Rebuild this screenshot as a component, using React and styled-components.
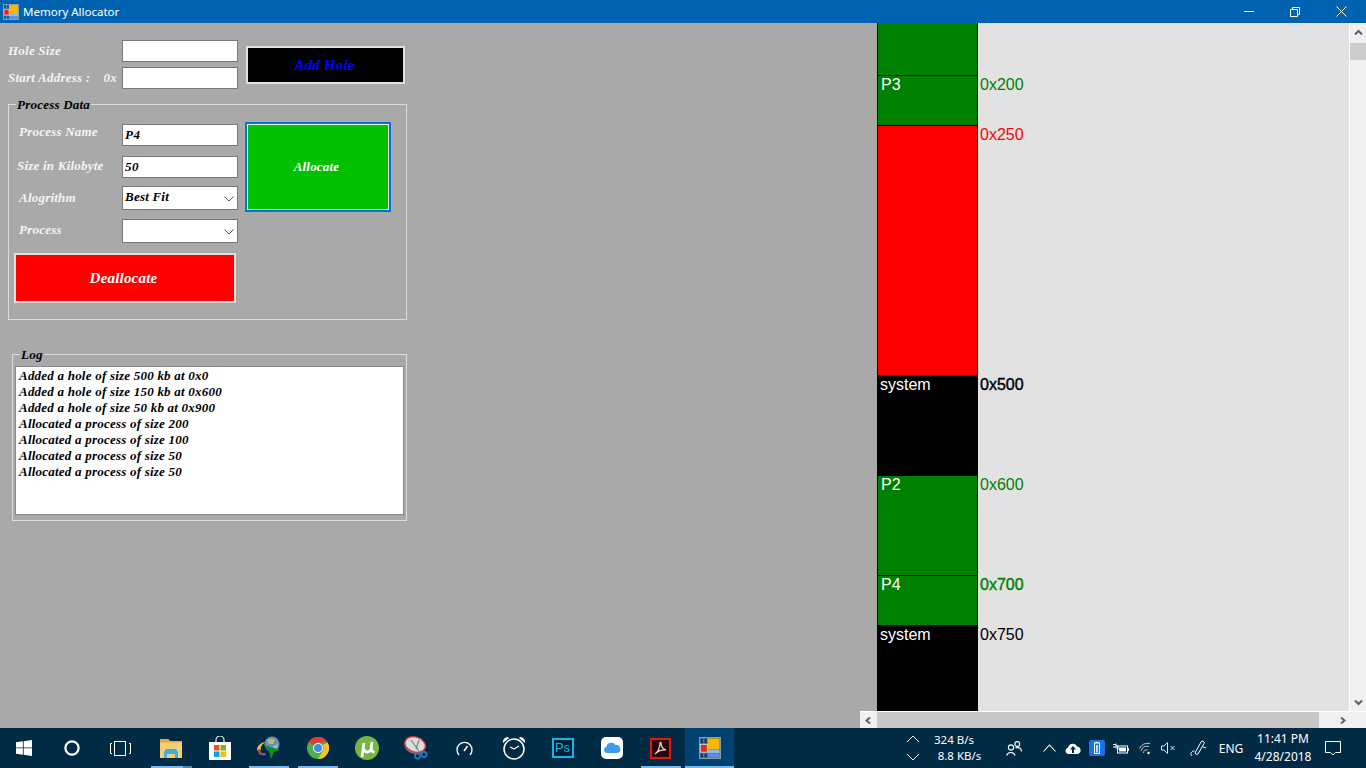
import React from 'react';
import styled, { createGlobalStyle } from 'styled-components';

const GlobalStyle = createGlobalStyle`
  html, body {
    margin: 0;
    padding: 0;
    width: 1366px;
    height: 768px;
    overflow: hidden;
  }
  * {
    box-sizing: border-box;
  }
`;

const Page = styled.div`
  width: 1366px;
  height: 768px;
  display: flex;
  flex-direction: column;
  background: #a9a9a9;
`;

/* ---- title bar ---- */

const TitleBar = styled.div`
  height: 23px;
  flex: none;
  display: flex;
  align-items: center;
  background: #0063b1;
  color: #fff;
  padding: 0 2px 0 3px;
  font: 11.5px 'Noto Sans', sans-serif;
`;

const TitleText = styled.span`
  margin-left: 4px;
  flex: 1;
`;

const WindowButton = styled.div`
  width: 46px;
  height: 23px;
  display: flex;
  align-items: center;
  justify-content: center;
`;

/* ---- form side ---- */

const Main = styled.div`
  flex: 1;
  min-height: 0;
  display: flex;
`;

const FormPanel = styled.div`
  width: 860px;
  flex: none;
  padding: 17px 0 0 8px;
  font: italic bold 13px 'Liberation Serif', serif;
  letter-spacing: 0.22px;
  color: #f4f4f4;
`;

const HoleSection = styled.div`
  display: flex;
  align-items: flex-start;
`;

const HoleFields = styled.div`
  display: grid;
  grid-template-columns: 114px 116px;
  grid-auto-rows: 22px;
  row-gap: 5px;
  align-items: center;
`;

const FieldLabel = styled.label`
  display: flex;
  justify-content: space-between;
  padding-left: ${({ $indent }) => $indent || 0}px;
  padding-right: ${({ $right }) => $right || 0}px;
  padding-bottom: ${({ $lift }) => $lift || 0}px;
  white-space: nowrap;
`;

const TextBox = styled.input`
  width: 116px;
  height: 22px;
  border: 1px solid #7a7a7a;
  background: #fff;
  padding: 0 2px;
  outline: none;
  font: italic bold 13px 'Liberation Serif', serif;
  letter-spacing: 0.6px;
  color: #000;
`;

const ComboBox = styled.div`
  width: 116px;
  height: 24px;
  border: 1px solid #7a7a7a;
  background: #fff;
  padding: 0 3px 3px 2px;
  display: flex;
  align-items: center;
  justify-content: space-between;
  color: #000;
`;

const ComboArrow = styled.svg`
  width: 10px;
  height: 6px;
  margin-top: 5px;
  margin-left: auto;
`;

const ActionButton = styled.button`
  display: block;
  padding: 0;
  width: ${({ $w }) => $w}px;
  height: ${({ $h }) => $h}px;
  border: 2px solid #e0e0e0;
  background: ${({ $bg }) => $bg};
  color: ${({ $fg }) => $fg};
  font: italic bold 15px 'Liberation Serif', serif;
  letter-spacing: 0.2px;
`;

const AddHoleButton = styled(ActionButton)`
  margin: 6px 0 0 8px;
  padding-right: 2px;
`;

const AllocateButton = styled(ActionButton)`
  grid-column: 3;
  grid-row: 1 / span 3;
  align-self: start;
  margin: -2px 0 0 7px;
  padding-right: 3px;
  border: 2px solid #0078d7;
  box-shadow: inset 0 0 0 1px #f0f0f0;
  font-size: 13px;
`;

const DeallocateButton = styled(ActionButton)`
  margin: 10px 0 0 5px;
  padding-right: 3px;
`;

const Group = styled.div`
  position: relative;
  width: ${({ $w }) => $w}px;
  height: ${({ $h }) => $h}px;
  margin-top: ${({ $top }) => $top}px;
  margin-left: ${({ $left }) => $left || 0}px;
  border: 1px solid #dcdcdc;
`;

const Legend = styled.span`
  position: absolute;
  top: -8px;
  left: 7px;
  padding: 0 1px;
  line-height: 15px;
  background: #a9a9a9;
  color: #000;
`;

const ProcessGrid = styled.div`
  display: grid;
  grid-template-columns: 113px 116px 153px;
  grid-template-rows: 22px 32px 32px 33px;
  align-items: end;
  padding-top: 19px;
`;

const LogBody = styled.div`
  padding: 11px 2px 0;
`;

const LogList = styled.div`
  height: 149px;
  border: 1px solid #828790;
  background: #fff;
  color: #000;
  padding: 1px 3px;
  line-height: 16px;
`;

/* ---- memory map side ---- */

const MapPanel = styled.div`
  flex: 1;
  min-width: 0;
  display: flex;
  flex-direction: column;
`;

const MapRow = styled.div`
  flex: 1;
  min-height: 0;
  display: flex;
`;

const MapViewport = styled.div`
  flex: 1;
  margin-left: 17px;
  background: #e2e2e2;
  overflow: hidden;
`;

const SlotRow = styled.div`
  display: flex;
  height: ${({ $h }) => $h}px;
`;

const Block = styled.div`
  width: 101px;
  flex: none;
  background: ${({ $bg }) => $bg};
  border: 1px solid #000;
  border-top-width: ${({ $cut }) => ($cut ? 0 : 1)}px;
  border-bottom: 0;
  padding: 0 0 0 ${({ $pad }) => $pad}px;
  color: #fff;
  font: 16px/18px 'Liberation Sans', Arial, sans-serif;
`;

const Address = styled.div`
  margin: 1px 0 0 2px;
  color: ${({ $color }) => $color};
  font: 16px/18px 'Liberation Sans', Arial, sans-serif;
  -webkit-text-stroke: ${({ $heavy }) => ($heavy ? '0.4px' : '0')};
`;

const VScroll = styled.div`
  width: 17px;
  flex: none;
  border-left: 1px solid #fff;
  background: #f0f0f0;
  display: flex;
  flex-direction: column;
  align-items: center;
  justify-content: space-between;
  padding: 6px 0 5px;
  position: relative;
`;

const VThumb = styled.div`
  position: absolute;
  top: 20px;
  left: 0;
  width: 16px;
  height: 17px;
  background: #cdcdcd;
`;

const HScroll = styled.div`
  height: 17px;
  flex: none;
  border-top: 1px solid #fff;
  background: #f0f0f0;
  display: flex;
  align-items: center;
`;

const HArrowCell = styled.div`
  width: ${({ $w }) => $w}px;
  flex: none;
  display: flex;
  justify-content: center;
`;

const HThumb = styled.div`
  width: 442px;
  height: 16px;
  flex: none;
  background: #c8c8c8;
`;

/* ---- taskbar ---- */

const Taskbar = styled.div`
  height: 40px;
  flex: none;
  display: flex;
  background: #012a45;
  color: #fff;
  font: 12px 'Noto Sans', sans-serif;
`;

const TaskTile = styled.div`
  position: relative;
  width: ${({ $w }) => $w || 49}px;
  margin-right: ${({ $gap }) => $gap || 0}px;
  flex: none;
  display: flex;
  align-items: center;
  justify-content: center;
  background: ${({ $active }) => ($active ? '#004272' : 'transparent')};
  &::after {
    content: '';
    display: ${({ $running }) => ($running ? 'block' : 'none')};
    position: absolute;
    bottom: 0;
    left: ${({ $active }) => ($active ? 0 : 5)}px;
    right: ${({ $active, $stacked }) => ($active ? 0 : $stacked ? 3 : 4)}px;
    height: 2px;
    background: ${({ $stacked }) =>
      $stacked ? 'linear-gradient(90deg, #76b9ed 0 32px, #4f86ad 32px)' : '#76b9ed'};
  }
`;

const Tray = styled.div`
  margin-left: auto;
  display: flex;
  padding-right: 20px;
`;

const TrayCell = styled.div`
  width: ${({ $w }) => $w}px;
  flex: none;
  display: flex;
  flex-direction: column;
  align-items: center;
  justify-content: center;
`;

const SpeedLine = styled.div`
  line-height: 16px;
  font-size: 11.5px;
  white-space: nowrap;
  margin-left: ${({ $shift }) => $shift}px;
`;

const ClockLine = styled.div`
  line-height: 18px;
  white-space: nowrap;
`;

/* ---- drawings ---- */

const AppIcon = ({ size }) => (
  <svg width={size} height={size} viewBox="0 0 16 16">
    <rect x="0.5" y="0.5" width="15" height="15" fill="none" stroke="#8c9aa8" />
    <path d="M1 5h5M3.500 1v4M1 11.500h5M3.500 11.500v3.500" stroke="#8c9aa8" strokeWidth="0.700" />
    <rect x="6" y="1" width="9" height="8" fill="#f8b800" />
    <rect x="6" y="9" width="9" height="3" fill="#8cb8ec" />
    <rect x="6" y="12" width="9" height="3" fill="#5c90dc" />
    <rect x="1" y="5.500" width="5" height="5.500" fill="#e02a20" stroke="#f0f0f0" strokeWidth="0.500" />
  </svg>
);

const Chevron = ({ d, color = '#606060', w = 2 }) => (
  <svg width="9" height="7" viewBox="0 0 9 7">
    <path d={d} fill="none" stroke={color} strokeWidth={w} />
  </svg>
);

const WindowsLogo = () => (
  <svg width="16" height="16" viewBox="0 0 16 16" fill="#fff">
    <path d="M0 2.300L6.900 1.300V7.500H0zM7.700 1.200L16 0V7.500H7.700zM0 8.300H6.900V14.700L0 13.700zM7.700 8.300H16V16L7.700 14.800z" />
  </svg>
);

const CortanaIcon = () => (
  <svg width="16" height="16" viewBox="0 0 16 16">
    <circle cx="8" cy="8" r="6.600" fill="none" stroke="#fff" strokeWidth="2.200" />
  </svg>
);

const TaskViewIcon = () => (
  <svg width="21" height="15" viewBox="0 0 21 15" fill="none" stroke="#fff">
    <rect x="4.500" y="0.500" width="11" height="14" />
    <path d="M2 2.500H0.500v10H2M19 2.500h1.500v10H19" />
  </svg>
);

const FolderIcon = () => (
  <svg width="22" height="20" viewBox="0 0 22 20">
    <path d="M0 1h8l2 2h12v17H0z" fill="#f3cf7a" />
    <path d="M0 1h8l2 2h12v1.500H0z" fill="#e0ac3c" />
    <path d="M6 11h10l2 3v6h-3v-4H7v4H4v-6z" fill="#3daee0" />
  </svg>
);

const StoreIcon = () => (
  <svg width="24" height="24" viewBox="0 0 24 24">
    <path d="M8 6V4a4 4 0 0 1 8 0v2" fill="none" stroke="#e8e8e8" strokeWidth="1.200" />
    <path d="M1 6h22v17a1 1 0 0 1-1 1H2a1 1 0 0 1-1-1z" fill="#fff" />
    <rect x="6" y="9" width="5.500" height="5.500" fill="#f25022" />
    <rect x="12.500" y="9" width="5.500" height="5.500" fill="#7fba00" />
    <rect x="6" y="15.500" width="5.500" height="5.500" fill="#00a4ef" />
    <rect x="12.500" y="15.500" width="5.500" height="5.500" fill="#ffb900" />
  </svg>
);

const IdmIcon = () => (
  <svg width="26" height="24" viewBox="0 0 26 24">
    <circle cx="16" cy="8" r="7.500" fill="#5f93c8" />
    <path d="M11 4c3-2 6-2 8 0l-2 4-4 0zM17 10l5-2-1 4-3 1z" fill="#c4b860" />
    <path d="M1 14C1 9 6 6 10 6C6 8 4 11 5 14z" fill="#e8c030" />
    <path d="M1 14c1 3 5 5 8 5-3-2-5-3-5-6z" fill="#d83a30" />
    <path d="M2 17c2 2 5 3 8 2l-1-2z" fill="#8050c0" />
    <path d="M8 9L24 14L18 16L15 23L13 15z" fill="#0f8f2a" />
  </svg>
);

const ChromeIcon = () => (
  <svg width="22" height="22" viewBox="0 0 22 22">
    <circle cx="11" cy="11" r="11" fill="#4caf50" />
    <path d="M11 0a11 11 0 0 1 9.530 5.500H11A5.500 5.500 0 0 0 6.200 8.300L1.800 4.900A11 11 0 0 1 11 0z" fill="#e53935" />
    <path d="M20.530 5.500A11 11 0 0 1 11 22l4.800-8.300A5.500 5.500 0 0 0 15.800 8z" fill="#fbc02d" />
    <circle cx="11" cy="11" r="5" fill="#fff" />
    <circle cx="11" cy="11" r="4" fill="#4a86e8" />
  </svg>
);

const TorrentIcon = () => (
  <svg width="24" height="24" viewBox="0 0 24 24">
    <circle cx="12" cy="12" r="12" fill="#76b83f" />
    <path d="M7 21l2-14M9 13c0 4 6 4 7 0l1-7M16.500 11c-.5 3 0 5 3 5" fill="none" stroke="#fff" strokeWidth="2.800" />
  </svg>
);

const SnipIcon = () => (
  <svg width="24" height="24" viewBox="0 0 24 24">
    <g transform="rotate(18 11 9)">
      <ellipse cx="11" cy="10.500" rx="10.500" ry="7.500" fill="#707478" />
      <ellipse cx="11" cy="8.500" rx="10.500" ry="7.500" fill="#dcdcdc" stroke="#d23a3a" strokeWidth="1.300" />
    </g>
    <path d="M7 4l8 11M15 4l-3 9" stroke="#808080" strokeWidth="1.200" />
    <circle cx="13.500" cy="20" r="2.600" fill="none" stroke="#1f7fd0" strokeWidth="1.600" />
    <circle cx="20" cy="18.500" r="2.600" fill="none" stroke="#1f7fd0" strokeWidth="1.600" />
  </svg>
);

const GaugeIcon = () => (
  <svg width="17" height="15" viewBox="0 0 17 15" fill="none" stroke="#fff" strokeWidth="1.300">
    <path d="M3 14A7.500 7.500 0 1 1 14 14" />
    <path d="M8 10l3.500-5" strokeWidth="1.500" />
  </svg>
);

const AlarmIcon = () => (
  <svg width="24" height="24" viewBox="0 0 24 24">
    <path d="M1 7a5 5 0 0 1 5-6l1 1zM23 7a5 5 0 0 0-5-6l-1 1z" fill="#fff" />
    <circle cx="12" cy="13" r="10" fill="#012a45" stroke="#fff" strokeWidth="1.500" />
    <path d="M12 13l-4-2M12 13l5-3" stroke="#fff" strokeWidth="1.300" />
  </svg>
);

const PsBadge = styled.div`
  width: 22px;
  height: 20px;
  border: 2px solid #19b5e8;
  background: #001e36;
  color: #19b5e8;
  font: 13px/16px 'Liberation Sans', sans-serif;
  text-align: center;
`;

const CloudIcon = () => (
  <svg width="22" height="22" viewBox="0 0 22 22">
    <rect width="22" height="22" rx="5" fill="#fff" />
    <path d="M6 16a3.200 3.200 0 0 1-.6-6.300A5 5 0 0 1 14.500 8a4 4 0 0 1 1.500 8z" fill="#3c9df0" />
  </svg>
);

const AcrobatIcon = () => (
  <svg width="21" height="21" viewBox="0 0 21 21">
    <rect x="1" y="1" width="19" height="19" fill="#2a0606" stroke="#e01a10" strokeWidth="2" />
    <path d="M5 16c3-2 5-7 5-11 0-1 1-1 1 0 0 4 2 6 5 7-4-.500-7 0-11 4z" fill="none" stroke="#f0d8d8" strokeWidth="1.200" />
  </svg>
);

const UpDownIcon = () => (
  <svg width="14" height="26" viewBox="0 0 14 26" fill="none" stroke="#fff">
    <path d="M1 7L7 1L13 7M1 19L7 25L13 19" />
  </svg>
);

const PeopleIcon = () => (
  <svg width="16" height="15" viewBox="0 0 16 15" fill="none" stroke="#fff" strokeWidth="1.100">
    <circle cx="5" cy="6.500" r="2.600" />
    <path d="M.6 14.500a4.500 4.500 0 0 1 8.500 0" />
    <circle cx="11.300" cy="3" r="2.400" />
    <path d="M9.500 7a4 4 0 0 1 6 3.500" />
  </svg>
);

const TrayChevronIcon = () => (
  <svg width="13" height="8" viewBox="0 0 13 8" fill="none" stroke="#fff" strokeWidth="1.100">
    <path d="M.5 7.500l6-6.500 6 6.500" />
  </svg>
);

const UploadCloudIcon = () => (
  <svg width="16" height="11" viewBox="0 0 16 11">
    <path d="M3.500 11a3.200 3.200 0 0 1-.5-6.300A5 5 0 0 1 12.300 3.500 3.800 3.800 0 0 1 12.500 11z" fill="#fff" />
    <path d="M8 3l3 3.500H9V10H7V6.500H5z" fill="#012a45" />
  </svg>
);

const BlueBatteryIcon = () => (
  <svg width="16" height="16" viewBox="0 0 16 16">
    <rect width="16" height="16" rx="2" fill="#1a74e0" />
    <rect x="5.500" y="3" width="5" height="10.500" fill="none" stroke="#fff" />
    <rect x="6.500" y="1.800" width="3" height="1.200" fill="#fff" />
    <rect x="7" y="5" width="2" height="7.500" fill="#bcdcff" />
  </svg>
);

const PlugBatteryIcon = () => (
  <svg width="16" height="11" viewBox="0 0 16 11">
    <path d="M0 1.500h3M0 4h3M3 .5v5M3 3h2v3.500" stroke="#fff" fill="none" />
    <rect x="4.500" y="3" width="10" height="7" fill="none" stroke="#fff" />
    <rect x="6" y="4.500" width="7" height="4" fill="#fff" />
    <rect x="15" y="5" width="1" height="3" fill="#fff" />
  </svg>
);

const WifiIcon = () => (
  <svg width="13" height="13" viewBox="0 0 13 13" fill="none" stroke="#d8d8d8" strokeWidth="0.900">
    <path d="M.5 6.500A9 9 0 0 1 11 1.500M2 9A6 6 0 0 1 10 4.500M4.500 11a3 3 0 0 1 4-3" />
    <circle cx="9.500" cy="11" r="1.200" fill="#fff" stroke="none" />
  </svg>
);

const MuteIcon = () => (
  <svg width="15" height="12" viewBox="0 0 15 12" fill="none" stroke="#fff" strokeWidth="0.900">
    <path d="M.5 4h2.500l3.500-3.500v11L3 8H.5zM9.500 4l4 4M13.500 4l-4 4" />
  </svg>
);

const PenIcon = () => (
  <svg width="17" height="17" viewBox="0 0 17 17" fill="none" stroke="#fff" strokeWidth="1">
    <path d="M5 13L11 2a1.500 1.500 0 0 1 3 1.500L8 14a2 2 0 0 1-3-1zM4.500 11C1 11 0 14 2 16M13 7l3 1" />
  </svg>
);

const NotifyIcon = () => (
  <svg width="16" height="15" viewBox="0 0 16 15" fill="none" stroke="#fff">
    <path d="M.500.500h15v11H10.500L8 14 5.500 11.500H.500z" />
  </svg>
);

const slots = [
  { h: 52, bg: '#008000', cut: true },
  { h: 50, bg: '#008000', name: 'P3', addr: '0x200', color: '#008000', pad: 3 },
  { h: 250, bg: '#ff0000', addr: '0x250', color: '#ff0000' },
  { h: 100, bg: '#000', name: 'system', addr: '0x500', color: '#000', pad: 2, heavy: true },
  { h: 100, bg: '#008000', name: 'P2', addr: '0x600', color: '#008000', pad: 3 },
  { h: 50, bg: '#008000', name: 'P4', addr: '0x700', color: '#008000', pad: 3, heavy: true },
  { h: 86, bg: '#000', name: 'system', addr: '0x750', color: '#000', pad: 2 },
];

const logLines = [
  'Added a hole of size 500 kb at 0x0',
  'Added a hole of size 150 kb at 0x600',
  'Added a hole of size 50 kb at 0x900',
  'Allocated a process of size 200',
  'Allocated a process of size 100',
  'Allocated a process of size 50',
  'Allocated a process of size 50',
];

const comboArrow = (
  <ComboArrow viewBox="0 0 10 6">
    <path d="M.5.500L5 5 9.500.500" fill="none" stroke="#555" />
  </ComboArrow>
);

export default function App() {
  return (
    <Page>
      <GlobalStyle />
      <TitleBar>
        <AppIcon size={16} />
        <TitleText>Memory Allocator</TitleText>
        <WindowButton>
          <svg width="10" height="1" viewBox="0 0 10 1">
            <path d="M0 .5h10" stroke="#fff" />
          </svg>
        </WindowButton>
        <WindowButton>
          <svg width="10" height="10" viewBox="0 0 10 10" fill="none" stroke="#fff">
            <path d="M.5 2.500h7v7h-7zM2.500 2.500v-2h7v7h-2" />
          </svg>
        </WindowButton>
        <WindowButton>
          <svg width="11" height="11" viewBox="0 0 11 11" fill="none" stroke="#fff">
            <path d="M.5.500l10 10M10.500.500l-10 10" />
          </svg>
        </WindowButton>
      </TitleBar>

      <Main>
        <FormPanel>
          <HoleSection>
            <HoleFields>
              <FieldLabel>Hole Size</FieldLabel>
              <TextBox readOnly value="" />
              <FieldLabel $right={5}>
                <span>Start Address :</span>
                <span>0x</span>
              </FieldLabel>
              <TextBox readOnly value="" />
            </HoleFields>
            <AddHoleButton $w={159} $h={38} $bg="#000" $fg="#0000ff">
              Add Hole
            </AddHoleButton>
          </HoleSection>

          <Group $w={399} $h={216} $top={15}>
            <Legend>Process Data</Legend>
            <ProcessGrid>
              <FieldLabel $indent={10} $lift={6}>Process Name</FieldLabel>
              <TextBox readOnly value="P4" />
              <AllocateButton $w={146} $h={90} $bg="#00c000" $fg="#fff">
                Allocate
              </AllocateButton>
              <FieldLabel $indent={8} $lift={4}>Size in Kilobyte</FieldLabel>
              <TextBox readOnly value="50" />
              <FieldLabel $indent={10} $lift={4}>Alogrithm</FieldLabel>
              <ComboBox>
                Best Fit
                {comboArrow}
              </ComboBox>
              <FieldLabel $indent={10} $lift={5}>Process</FieldLabel>
              <ComboBox>{comboArrow}</ComboBox>
            </ProcessGrid>
            <DeallocateButton $w={222} $h={50} $bg="#ff0000" $fg="#fff">
              Deallocate
            </DeallocateButton>
          </Group>

          <Group $w={395} $h={167} $top={34} $left={4}>
            <Legend>Log</Legend>
            <LogBody>
              <LogList>
                {logLines.map((line, i) => (
                  <div key={i}>{line}</div>
                ))}
              </LogList>
            </LogBody>
          </Group>
        </FormPanel>

        <MapPanel>
          <MapRow>
            <MapViewport>
              {slots.map((slot, i) => (
                <SlotRow key={i} $h={slot.h}>
                  <Block $bg={slot.bg} $pad={slot.pad} $cut={slot.cut}>{slot.name}</Block>
                  <Address $color={slot.color} $heavy={slot.heavy}>{slot.addr}</Address>
                </SlotRow>
              ))}
            </MapViewport>
            <VScroll>
              <Chevron d="M1 5.500l3.500-3.500 3.500 3.500" />
              <VThumb />
              <Chevron d="M1 1.500l3.500 3.500 3.500-3.500" />
            </VScroll>
          </MapRow>
          <HScroll>
            <HArrowCell $w={17}>
              <Chevron d="M6 .5L2.500 3.500 6 6.500" />
            </HArrowCell>
            <HThumb />
            <HArrowCell $w={47}>
              <Chevron d="M3 .5L6.500 3.500 3 6.500" />
            </HArrowCell>
          </HScroll>
        </MapPanel>
      </Main>

      <Taskbar>
        <TaskTile $w={48}><WindowsLogo /></TaskTile>
        <TaskTile $w={48}><CortanaIcon /></TaskTile>
        <TaskTile $w={48} $gap={2}><TaskViewIcon /></TaskTile>
        <TaskTile $running $stacked><FolderIcon /></TaskTile>
        <TaskTile><StoreIcon /></TaskTile>
        <TaskTile $running><IdmIcon /></TaskTile>
        <TaskTile $running><ChromeIcon /></TaskTile>
        <TaskTile><TorrentIcon /></TaskTile>
        <TaskTile><SnipIcon /></TaskTile>
        <TaskTile><GaugeIcon /></TaskTile>
        <TaskTile><AlarmIcon /></TaskTile>
        <TaskTile><PsBadge>Ps</PsBadge></TaskTile>
        <TaskTile><CloudIcon /></TaskTile>
        <TaskTile $running><AcrobatIcon /></TaskTile>
        <TaskTile $running $active><AppIcon size={22} /></TaskTile>

        <Tray>
          <TrayCell $w={22}><UpDownIcon /></TrayCell>
          <TrayCell $w={66}>
            <SpeedLine $shift={-6}>324 B/s</SpeedLine>
            <SpeedLine $shift={5}>8.8 KB/s</SpeedLine>
          </TrayCell>
          <TrayCell $w={47}><PeopleIcon /></TrayCell>
          <TrayCell $w={24}><TrayChevronIcon /></TrayCell>
          <TrayCell $w={24}><UploadCloudIcon /></TrayCell>
          <TrayCell $w={24}><BlueBatteryIcon /></TrayCell>
          <TrayCell $w={24}><PlugBatteryIcon /></TrayCell>
          <TrayCell $w={24}><WifiIcon /></TrayCell>
          <TrayCell $w={23}><MuteIcon /></TrayCell>
          <TrayCell $w={36}><PenIcon /></TrayCell>
          <TrayCell $w={30}>ENG</TrayCell>
          <TrayCell $w={74}>
            <ClockLine>11:41 PM</ClockLine>
            <ClockLine>4/28/2018</ClockLine>
          </TrayCell>
          <TrayCell $w={26}><NotifyIcon /></TrayCell>
        </Tray>
      </Taskbar>
    </Page>
  );
}
